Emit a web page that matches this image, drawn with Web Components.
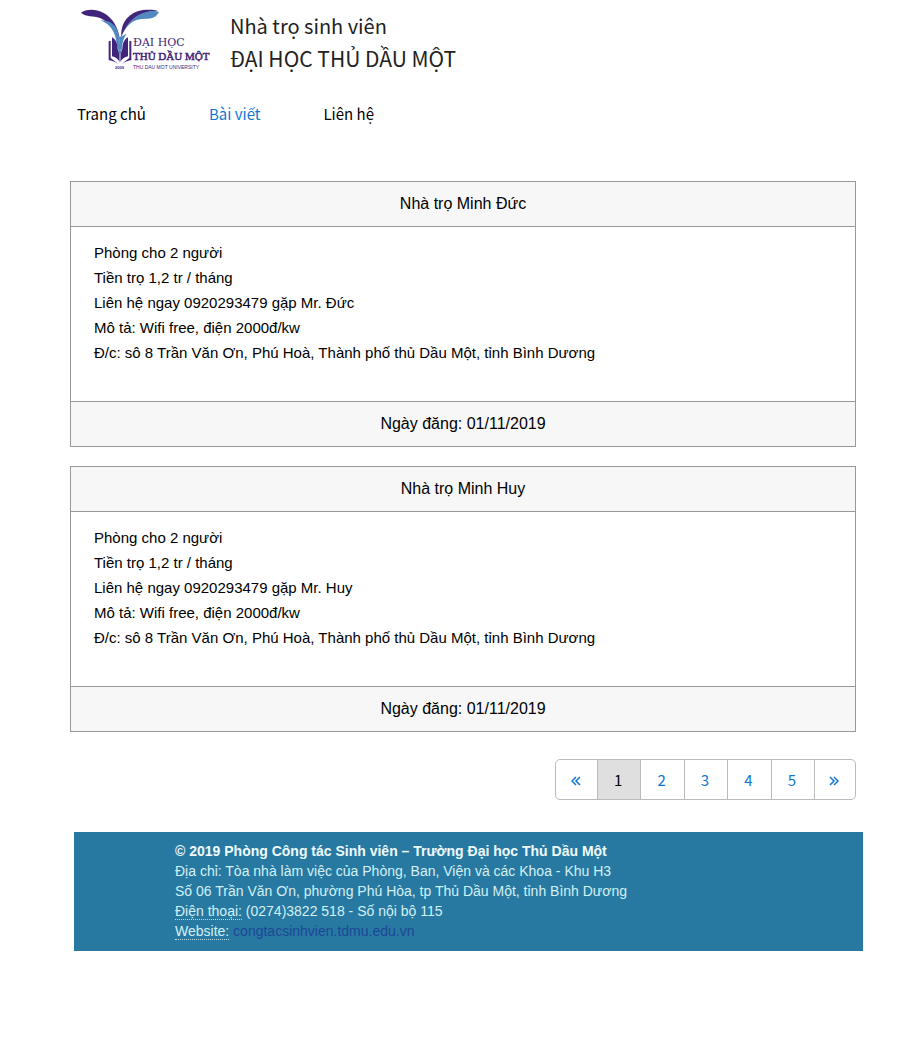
<!DOCTYPE html>
<html lang="vi">
<head>
<meta charset="utf-8">
<meta name="viewport" content="width=device-width, initial-scale=1">
<title>Nhà trọ sinh viên</title>
<style>
body { margin: 0; background: #fff; color: #000; font-family: "Liberation Sans", Arial, sans-serif; --ui: "Noto Sans CJK SC", "Noto Sans", sans-serif; --link: #0f76d6; }
</style>
</head>
<body>
<hostel-page>
  <site-header slot="header"></site-header>
  <site-nav slot="nav"></site-nav>
  <post-card>
    <span slot="title">Nhà trọ Minh Đức</span>
    <div>Phòng cho 2 người</div>
    <div>Tiền trọ 1,2 tr / tháng</div>
    <div>Liên hệ ngay 0920293479 gặp Mr. Đức</div>
    <div>Mô tả: Wifi free, điện 2000đ/kw</div>
    <div>Đ/c: sô 8 Trần Văn Ơn, Phú Hoà, Thành phố thủ Dầu Một, tỉnh Bình Dương</div>
    <span slot="date">Ngày đăng: 01/11/2019</span>
  </post-card>
  <post-card>
    <span slot="title">Nhà trọ Minh Huy</span>
    <div>Phòng cho 2 người</div>
    <div>Tiền trọ 1,2 tr / tháng</div>
    <div>Liên hệ ngay 0920293479 gặp Mr. Huy</div>
    <div>Mô tả: Wifi free, điện 2000đ/kw</div>
    <div>Đ/c: sô 8 Trần Văn Ơn, Phú Hoà, Thành phố thủ Dầu Một, tỉnh Bình Dương</div>
    <span slot="date">Ngày đăng: 01/11/2019</span>
  </post-card>
  <page-numbers slot="pages"></page-numbers>
  <site-footer slot="footer"></site-footer>
</hostel-page>
<script>
const define = (name, html) => {
  const template = document.createElement('template');
  template.innerHTML = html;
  customElements.define(name, class extends HTMLElement {
    constructor() {
      super();
      this.attachShadow({ mode: 'open' }).append(template.content.cloneNode(true));
    }
  });
};

define('hostel-page', `
<style>
:host { display: block; padding: 0 50px 48px 70px; }
main { display: grid; gap: 19px; margin: 55px 7px 27px 0; }
.pages { display: flex; justify-content: flex-end; margin: 0 7px 32px 0; }
.footer { margin-left: 4px; }
</style>
<slot name="header"></slot>
<slot name="nav"></slot>
<main><slot></slot></main>
<div class="pages"><slot name="pages"></slot></div>
<div class="footer"><slot name="footer"></slot></div>`);

define('uni-logo', `
<style>
:host { display: block; flex: none; }
svg { display: block; }
text { fill: #40257a; }
.serif { font-family: "Liberation Serif", serif; font-size: 11px; stroke: #40257a; stroke-width: .5; }
.wide { font-family: "DejaVu Serif", serif; font-size: 11px; }
.small { font-family: "Liberation Sans", sans-serif; font-size: 5px; }
.year { font-family: "Liberation Sans", sans-serif; font-size: 4px; font-weight: bold; }
</style>
<svg width="145" height="80" viewBox="0 0 145 80" role="img" aria-label="Đại học Thủ Dầu Một">
  <g transform="scale(.33333)">
    <path fill="#40257a" d="M33 38C47 28 75 25 101 39C129 54 145 84 150 119C136 92 119 67 90 54C70 46 49 52 33 38Z"/>
    <path fill="#5289c2" d="M91 61C114 61 133 70 142 90C148 104 149 127 150 154C140 148 141 125 135 107C127 84 115 71 91 61Z"/>
    <path fill="#40257a" d="M154 112C151 78 167 46 203 34C226 27 250 29 265 33C230 32 202 45 184 63C169 79 159 96 154 112Z"/>
    <path fill="#5289c2" d="M159 98C172 70 191 49 222 38C243 31 257 32 267 36C259 51 247 57 231 56C196 55 177 67 159 98Z"/>
    <path fill="#40257a" d="M116 124L122 122V174L145 192C132 184 121 180 116 181ZM126 112C137 118 142 129 143 147L149 160V187C143 174 132 170 126 169ZM174 112C163 118 158 129 157 147L151 160V187C157 174 168 170 174 169ZM184 124L178 122V174L155 192C168 184 179 180 184 181Z"/>
    <path fill="#5289c2" d="M148 110C157 111 163 103 170 102C162 113 157 122 156 149H147Z"/>
    <circle cx="150" cy="155" r="5" fill="#5289c2"/>
    <path stroke="#fff" stroke-width="1" d="M150 160V187"/>
  </g>
  <text class="wide" x="63" y="46">ĐẠI HỌC</text>
  <text class="serif" x="63" y="60">THỦ DẦU MỘT</text>
  <text class="small" x="63" y="69">THU DAU MOT UNIVERSITY</text>
  <text class="year" x="45" y="69">2009</text>
</svg>`);

define('site-header', `
<style>
:host { display: flex; gap: 15px; }
h1 { margin: 10px 0 0; font: 400 20px/32px var(--ui); color: #222; }
h1 span { display: block; }
.name { font-size: 21px; }
</style>
<uni-logo></uni-logo>
<h1><span>Nhà trọ sinh viên</span><span class="name">ĐẠI HỌC THỦ DẦU MỘT</span></h1>`);

define('site-nav', `
<style>
:host { display: block; padding: 22px 7px 0; }
nav { display: flex; gap: 63px; font: 15px/24px var(--ui); }
a { color: #000; text-decoration: none; }
a[aria-current] { color: var(--link); }
</style>
<nav><a href="#home">Trang chủ</a><a href="#posts" aria-current="page">Bài viết</a><a href="#contact">Liên hệ</a></nav>`);

define('post-card', `
<style>
:host { display: block; }
article { border: 1px solid #999; }
h2, footer { margin: 0; background: #f7f7f7; font-size: 16px; font-weight: 400; line-height: 44px; text-align: center; }
h2 { border-bottom: 1px solid #999; }
footer { border-top: 1px solid #999; }
.text { padding: 13px 23px 36px; font-size: 15px; line-height: 25px; }
</style>
<article>
  <h2><slot name="title"></slot></h2>
  <div class="text"><slot></slot></div>
  <footer><slot name="date"></slot></footer>
</article>`);

define('page-numbers', `
<style>
:host { display: block; }
nav { display: grid; grid-template-columns: 41px repeat(5, 1fr) 41px; box-sizing: border-box; width: 301px; border: 1px solid #bbb; border-radius: 5px; overflow: hidden; font: 15px/38px var(--ui); }
a { display: flex; align-items: center; justify-content: center; height: 39px; box-sizing: border-box; padding-right: 2px; color: var(--link); text-decoration: none; }
a + a { border-left: 1px solid #bbb; }
a[aria-current] { background: #dfdfdf; color: #000; }
svg { fill: none; stroke: currentColor; stroke-width: 1.5; margin-top: 3px; }
</style>
<nav aria-label="Trang">
  <a href="#prev" aria-label="Trang trước"><svg width="10" height="10" viewBox="0 0 10 10"><path d="M5 1L1 5L5 9M9 1L5 5L9 9"/></svg></a>
  <a href="#1" aria-current="page">1</a><a href="#2">2</a><a href="#3">3</a><a href="#4">4</a><a href="#5">5</a>
  <a href="#next" aria-label="Trang sau"><svg width="10" height="10" viewBox="0 0 10 10"><path d="M1 1L5 5L1 9M5 1L9 5L5 9"/></svg></a>
</nav>`);

define('site-footer', `
<style>
:host { display: block; padding: 9px 20px 10px 101px; background: #2779a2; color: #d3f0f4; font-size: 14px; line-height: 20px; }
p { margin: 0; }
strong { color: #effcff; }
.label { border-bottom: 1px dotted #b5dce5; }
a { color: #1d4796; text-decoration: none; }
</style>
<footer>
  <p><strong>© 2019 Phòng Công tác Sinh viên – Trường Đại học Thủ Dầu Một</strong></p>
  <p>Địa chỉ: Tòa nhà làm việc của Phòng, Ban, Viện và các Khoa - Khu H3</p>
  <p>Số 06 Trần Văn Ơn, phường Phú Hòa, tp Thủ Dầu Một, tỉnh Bình Dương</p>
  <p><span class="label">Điện thoại:</span> (0274)3822 518 - Số nội bộ 115</p>
  <p><span class="label">Website:</span> <a href="#website">congtacsinhvien.tdmu.edu.vn</a></p>
</footer>`);
</script>
</body>
</html>
